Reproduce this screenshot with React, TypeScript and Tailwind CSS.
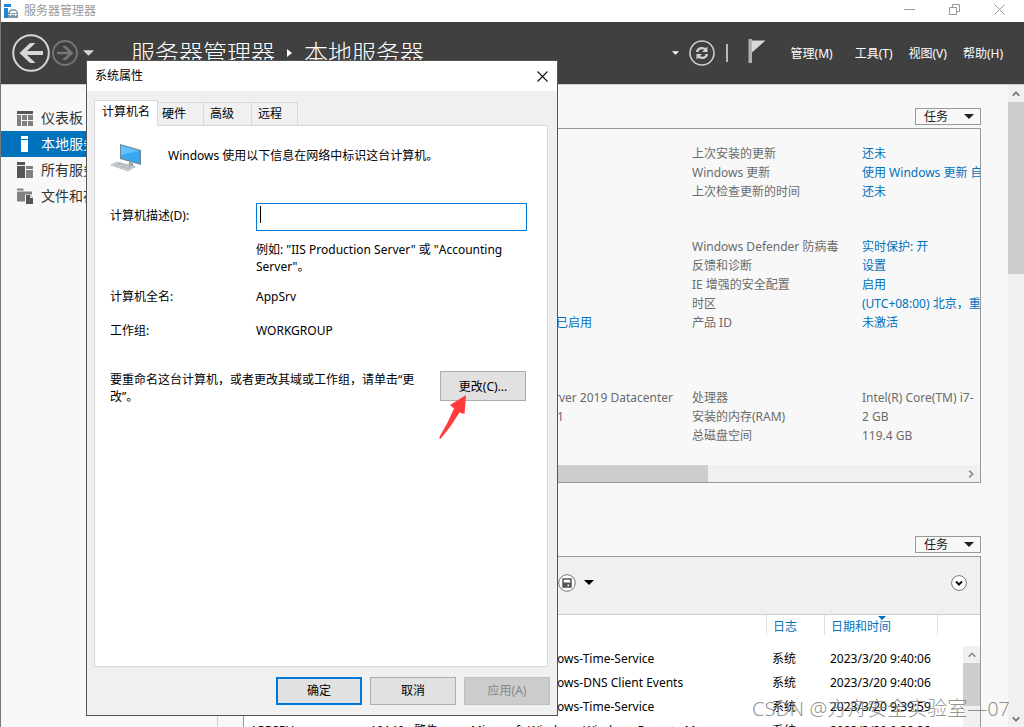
import React from "react";

const menus = ["管理(M)", "工具(T)", "视图(V)", "帮助(H)"];

const tabs = ["硬件", "高级", "远程"];

type Row = { mid?: string; label: string; value: string; link?: boolean };

const groups: Row[][] = [
  [
    { label: "上次安装的更新", value: "还未", link: true },
    { label: "Windows 更新", value: "使用 Windows 更新 自", link: true },
    { label: "上次检查更新的时间", value: "还未", link: true },
  ],
  [
    { label: "Windows Defender 防病毒", value: "实时保护: 开", link: true },
    { label: "反馈和诊断", value: "设置", link: true },
    { label: "IE 增强的安全配置", value: "启用", link: true },
    { label: "时区", value: "(UTC+08:00) 北京，重", link: true },
    { mid: "已启用", label: "产品 ID", value: "未激活", link: true },
  ],
  [
    { mid: "Microsoft Windows Server 2019 Datacenter", label: "处理器", value: "Intel(R) Core(TM) i7-" },
    { mid: "1", label: "安装的内存(RAM)", value: "2 GB" },
    { label: "总磁盘空间", value: "119.4 GB" },
  ],
];

const events = [
  { id: "37", level: "信息", source: "Microsoft-Windows-Time-Service", time: "2023/3/20 9:40:06" },
  { id: "1014", level: "警告", source: "Microsoft-Windows-DNS Client Events", time: "2023/3/20 9:40:06" },
  { id: "37", level: "信息", source: "Microsoft-Windows-Time-Service", time: "2023/3/20 9:39:59" },
  { id: "10149", level: "警告", source: "Microsoft-Windows-Windows Remote M...", time: "2023/3/20 9:38:38" },
];

function Caret({ className }: { className: string }) {
  return (
    <svg viewBox="0 0 10 5" className={className} fill="currentColor" aria-hidden="true">
      <path d="M0 0h10L5 5z" />
    </svg>
  );
}

function Chevron({ className }: { className: string }) {
  return (
    <svg viewBox="0 0 8 8" className={className} fill="none" stroke="currentColor" strokeWidth="1.6" aria-hidden="true">
      <path d="M0.7 5.8L4 2.3l3.3 3.5" />
    </svg>
  );
}

function TaskButton() {
  return (
    <button className="flex h-[17px] w-[66px] items-center justify-between border border-[#999] pr-[6px] pl-2 text-[#222]">
      任务
      <Caret className="h-[5px] w-[10px]" />
    </button>
  );
}

function TitleBar() {
  return (
    <div className="flex h-[22px] shrink-0 items-center justify-between bg-white pr-[19px] pl-[3px] text-[#999]">
      <div className="flex items-center gap-[5px]">
        <svg viewBox="0 0 15 14" className="h-[14px] w-[15px]" aria-hidden="true">
          <path d="M0 0h7v3H0zM0 4h4v10H0z" fill="#1e88d8" />
          <path d="M4 9h10v5H4z" fill="#7897a9" />
          <path d="M4.500 9l2.500-3h4.500l2 3" fill="none" stroke="#7897a9" strokeWidth="1.300" />
          <path d="M4.500 10.500h9M6.500 9.500v2.500m5-2.500v2.500" stroke="#fff" strokeWidth="0.800" />
        </svg>
        <span>服务器管理器</span>
      </div>
      <div className="flex items-center gap-[34px] pb-1">
        <button aria-label="最小化">
          <svg viewBox="0 0 11 11" className="size-[11px]" stroke="#999" fill="none"><path d="M0 5.500h11" /></svg>
        </button>
        <button aria-label="还原">
          <svg viewBox="0 0 11 11" className="size-[11px]" stroke="#999" fill="none">
            <path d="M0.500 3.500h7v7h-7zM3.500 3V0.500h7v7H8" />
          </svg>
        </button>
        <button aria-label="关闭">
          <svg viewBox="0 0 11 11" className="size-[11px]" stroke="#999" fill="none"><path d="M0.500 0.500l10 10m0-10l-10 10" /></svg>
        </button>
      </div>
    </div>
  );
}

function Header() {
  return (
    <header className="flex h-[63px] shrink-0 items-center border-b border-[#d0d0d0] bg-[#404040] pr-[21px] pl-[11px] text-white">
      <button aria-label="后退">
        <svg viewBox="0 0 38 38" className="size-[38px]" fill="none" stroke="#d6d6d6">
          <circle cx="19" cy="19" r="17.800" strokeWidth="2" />
          <path d="M31 19H10" strokeWidth="4" />
          <path d="M23.500 9h-5.500L7.500 19 18 29h5.500L13 19z" fill="#d6d6d6" stroke="none" />
        </svg>
      </button>
      <button aria-label="前进" className="ml-[2px]">
        <svg viewBox="0 0 26 26" className="size-[26px]" fill="none" stroke="#777">
          <circle cx="13" cy="13" r="12" strokeWidth="1.800" />
          <path d="M5 13h14" strokeWidth="2.500" />
          <path d="M10 6h4l7.500 7-7.500 7h-4l7.500-7z" fill="#777" stroke="none" />
        </svg>
      </button>
      <Caret className="ml-[5px] h-[6px] w-[11px] text-[#d6d6d6]" />
      <h1 className="ml-[37px] flex items-center text-2xl font-light whitespace-nowrap">
        服务器管理器
        <svg viewBox="0 0 5 8" className="mx-3 h-2 w-[5px]" fill="#fff"><path d="M0 0l5 4-5 4z" /></svg>
        本地服务器
      </h1>
      <div className="ml-auto flex items-center">
        <Caret className="h-1 w-[7px]" />
        <button aria-label="刷新" className="ml-[10px]">
          <svg viewBox="0 0 26 26" className="size-[26px]" fill="none" stroke="#d0d0d0">
            <circle cx="13" cy="13" r="12" strokeWidth="1.500" />
            <path d="M8 12c1-4.500 6.500-5 9-2M18 14c-1 4.500-6.500 5-9 2" strokeWidth="2.300" />
            <path d="M18.500 6.500v5.500H13zM7.500 19.500V14H13z" fill="#d0d0d0" stroke="none" />
          </svg>
        </button>
        <span className="ml-[11px] h-[18px] w-[2px] bg-[#b8b8b8]" />
        <button aria-label="通知" className="ml-[20px] pb-1">
          <svg viewBox="0 0 18 24" className="h-6 w-[18px]">
            <path d="M0.500 0H4v24H0.500z" fill="#b0b0b0" />
            <path d="M4 1.500h13.500L4 13.500z" fill="#d8d8d8" />
          </svg>
        </button>
        <nav className="ml-[25px] flex pt-[2px]">
          {menus.map((m, i) => (
            <button key={m} className={i === 0 ? "" : i === 1 ? "ml-[22px]" : "ml-4"}>{m}</button>
          ))}
        </nav>
      </div>
    </header>
  );
}

function Sidebar() {
  const item = "flex h-[26px] w-full items-center gap-2 pl-4 text-sm whitespace-nowrap";
  return (
    <aside className="w-[217px] shrink-0 border-r border-[#d0d0d0] pt-5 text-[#333]">
      <a href="#dashboard" className={item}>
        <svg viewBox="0 0 16 15" className="h-[15px] w-4">
          <path d="M0 0h16v3H0z" fill="#555" />
          <path d="M0 4h4v11H0zM5 4h5v5H5zM11 4h5v5h-5zM5 10h5v5H5zM11 10h5v5h-5z" fill="#808080" />
        </svg>
        仪表板
      </a>
      <a href="#local" className={`${item} bg-[#0072bc] text-white`}>
        <svg viewBox="0 0 16 16" className="size-4" fill="#fff"><path d="M4 0h7v3H4zM4 4h7v12H4z" /></svg>
        本地服务器
      </a>
      <a href="#all" className={item}>
        <svg viewBox="0 0 16 16" className="size-4">
          <path d="M0 0h8v3H0zM0 4h8v12H0z" fill="#555" />
          <path d="M9 4h7v3H9zM9 8h7v8H9z" fill="#808080" />
        </svg>
        所有服务器
      </a>
      <a href="#files" className={item}>
        <svg viewBox="0 0 16 16" className="size-4">
          <path d="M0 0.500h6l1 2H0zM0 3.500h15v3H8v7H0z" fill="#808080" />
          <path d="M9 7h4l3 3v6H9z" fill="#555" />
          <path d="M13 7v3h3z" fill="#ddd" />
        </svg>
        文件和存储服务
      </a>
    </aside>
  );
}

function Properties() {
  return (
    <section className="flex h-[355px] flex-col overflow-hidden border border-[#999]">
      <div className="flex grow flex-col overflow-hidden pt-[15px] pl-[216px] text-[#6b6b6b]">
        {groups.map((g, i) => (
          <dl key={i} className={i === 0 ? "" : i === 1 ? "mt-9" : "mt-14"}>
            {g.map((r) => (
              <div key={r.label} className="flex h-[19px] items-center whitespace-nowrap">
                <dd className={r.mid === "已启用" ? "w-[232px] shrink-0 pl-[96px] text-[#0072bc]" : r.mid === "1" ? "w-[232px] shrink-0 pl-[97px]" : "flex w-[232px] shrink-0 justify-end pr-[19px]"}>
                  {r.mid}
                </dd>
                <dt className="w-[170px] shrink-0">{r.label}</dt>
                <dd className="shrink-0">
                  {r.link ? <a href="#setting" className="text-[#0072bc]">{r.value}</a> : r.value}
                </dd>
              </div>
            ))}
          </dl>
        ))}
      </div>
      <div className="flex h-[17px] shrink-0 items-center bg-[#f0f0f0]">
        <div className="h-full w-[464px] bg-[#cdcdcd]" />
        <Chevron className="mr-[5px] ml-auto size-2 rotate-90 text-[#888]" />
      </div>
    </section>
  );
}

function Events() {
  return (
    <section className="border border-[#999] bg-white">
      <div className="flex h-[58px] items-center border-b border-[#ccc] bg-[#f0f0f0] pr-[13px] pb-[6px] pl-[314px]">
        <button aria-label="保存">
          <svg viewBox="0 0 18 18" className="size-[18px]">
            <circle cx="9" cy="9" r="8.300" fill="#fff" stroke="#777" />
            <path d="M5 5h8v8H5z" fill="#fff" stroke="#555" strokeWidth="1.500" />
            <path d="M5 8.500h8V13h-2v-2.500H9.500V13H5z" fill="#555" />
          </svg>
        </button>
        <Caret className="ml-2 h-[5px] w-[10px] text-black" />
        <button aria-label="展开" className="ml-auto">
          <svg viewBox="0 0 16 16" className="size-4">
            <circle cx="8" cy="8" r="7.400" fill="#fff" stroke="#777" />
            <path d="M5 6.500l3 3 3-3" fill="none" stroke="#111" strokeWidth="2" />
          </svg>
        </button>
      </div>
      <div className="flex items-start">
        <table className="w-[694px] table-fixed border-collapse text-left whitespace-nowrap text-black">
          <colgroup>
            <col className="w-[126px]" />
            <col className="w-[44px]" />
            <col className="w-[57px]" />
            <col />
            <col className="w-[58px]" />
            <col className="w-[114px]" />
          </colgroup>
          <thead className="text-[#0072bc]">
            <tr className="h-8 align-top">
              <th colSpan={4} />
              <th className="font-normal">
                <div className="border-l border-[#ddd] pt-1 pl-[6px]">日志</div>
              </th>
              <th className="font-normal">
                <div className="relative border-x border-[#ddd] pt-1 pl-[6px]">
                  日期和时间
                  <Caret className="absolute top-px left-[53px] h-1 w-2" />
                </div>
              </th>
            </tr>
          </thead>
          <tbody>
            {events.map((e, i) => (
              <tr key={i} className="h-6">
                <td className="pl-[6px]">APPSRV</td>
                <td>{e.id}</td>
                <td>{e.level}</td>
                <td>{e.source}</td>
                <td className="pl-[6px]">系统</td>
                <td className="pl-[6px]">{e.time}</td>
              </tr>
            ))}
          </tbody>
        </table>
        <div className="mt-[31px] ml-auto h-[200px] w-[17px] bg-[#f0f0f0] text-[#888]">
          <div className="flex h-[17px] items-center justify-center"><Chevron className="size-2" /></div>
          <div className="h-[43px] bg-[#cdcdcd]" />
        </div>
      </div>
    </section>
  );
}

function Computer() {
  return (
    <svg viewBox="0 0 32 30" className="h-[30px] w-8" aria-hidden="true">
      <path d="M10 1l21 6v15l-21-6z" fill="#6f8796" />
      <path d="M11 2.500l18.500 5.300v12.500L11 15z" fill="#35a8f0" />
      <path d="M11 2.500l18.500 5.300L11 12z" fill="#62c0fa" />
      <path d="M19 19l4 1.200v3l-4-1.200z" fill="#8c9aa3" />
      <path d="M14 22l6-1 6 3-6 2z" fill="#a9b4bb" />
      <path d="M1 22l6-3 18 4.500-7 4.500z" fill="#d5dadd" stroke="#9aa4ab" strokeWidth="0.600" />
      <path d="M4 21l16 5M7 20l15 4.500M6 23.500l6-3.500M11 25l6-3.500M16 26l5-3.300" stroke="#9aa4ab" strokeWidth="0.700" />
    </svg>
  );
}

function Dialog() {
  const btn = "flex h-7 w-[86px] items-center justify-center border";
  return (
    <div role="dialog" aria-label="系统属性" className="absolute top-[60px] left-[85px] flex h-[656px] w-[472px] flex-col border border-[#555] bg-[#f0f0f0] text-black">
      <div className="flex h-[30px] shrink-0 items-center justify-between bg-white pr-[9px] pl-2">
        <span>系统属性</span>
        <button aria-label="关闭对话框">
          <svg viewBox="0 0 11 11" className="size-[11px]" stroke="#111" fill="none"><path d="M0.500 0.500l10 10m0-10l-10 10" strokeWidth="1.100" /></svg>
        </button>
      </div>
      <div className="flex shrink-0 items-end pt-[9px] pl-[7px]">
        <button className="relative -mb-px h-[26px] w-16 border border-b-0 border-[#d9d9d9] bg-white pb-1">计算机名</button>
        {tabs.map((t, i) => (
          <button key={t} className={`h-[23px] border-t border-r border-[#d9d9d9] text-left ${i === 0 ? "w-[46px] pl-1" : i === 1 ? "w-12 pl-[6px]" : "w-[46px] pl-[6px]"}`}>{t}</button>
        ))}
      </div>
      <div className="mr-[9px] ml-[7px] flex grow flex-col border border-[#d9d9d9] bg-white px-[15px] pt-[17px]">
        <div className="flex items-center gap-[26px]">
          <Computer />
          <p className="pb-1">Windows 使用以下信息在网络中标识这台计算机。</p>
        </div>
        <div className="mt-[30px] grid grid-cols-[146px_1fr] leading-[17px]">
          <label htmlFor="desc" className="pt-1">计算机描述(D):</label>
          <div className="relative mr-[5px]">
            <input id="desc" type="text" className="h-7 w-full border border-[#0078d7] bg-white px-[3px] outline-none" />
            <span className="pointer-events-none absolute top-[3px] left-1 h-[17px] w-px bg-black" />
          </div>
          <p className="col-start-2 mt-[10px] w-[262px]">例如: "IIS Production Server" 或 "Accounting Server"。</p>
          <span className="mt-[13px]">计算机全名:</span>
          <span className="mt-[13px]">AppSrv</span>
          <span className="mt-[17px]">工作组:</span>
          <span className="mt-[17px]">WORKGROUP</span>
        </div>
        <div className="relative mt-8 flex items-start justify-between pr-[6px] leading-[17px]">
          <p className="w-[310px]">要重命名这台计算机，或者更改其域或工作组，请单击“更改”。</p>
          <button className="flex h-[30px] w-[86px] items-center justify-center border border-[#adadad] bg-[#e1e1e1]">更改(C)...</button>
          <svg viewBox="0 0 28 44" className="pointer-events-none absolute top-6 left-[329px] h-11 w-7" fill="#ff3b3b" aria-hidden="true">
            <path d="M27 0L25.500 19l-5-1.500Q12 32 1.500 44q-2-.5-.5-3Q9 28 15 13.500L11 10z" />
          </svg>
        </div>
      </div>
      <div className="flex shrink-0 justify-end gap-2 px-[7px] pt-[10px] pb-[10px]">
        <button className="flex h-7 w-[86px] items-center justify-center border-2 border-[#0078d7] bg-[#e1e1e1]">确定</button>
        <button className={`${btn} border-[#adadad] bg-[#e1e1e1]`}>取消</button>
        <button disabled className={`${btn} border-[#bfbfbf] bg-[#ccc] text-[#888]`}>应用(A)</button>
      </div>
    </div>
  );
}

export default function App() {
  return (
    <div className="relative flex h-screen flex-col overflow-hidden border-l border-[#777] bg-[#f8f8f8] font-['Noto_Sans','Noto_Sans_CJK_SC',sans-serif] text-xs">
      <TitleBar />
      <Header />
      <div className="flex min-h-0 grow">
        <Sidebar />
        <main className="min-w-0 grow overflow-hidden pr-[27px] pl-[25px]">
          <div className="flex justify-end pt-[23px] pb-[3px]"><TaskButton /></div>
          <Properties />
          <div className="flex justify-end pt-[53px] pb-[3px]"><TaskButton /></div>
          <Events />
        </main>
        <div className="flex w-4 shrink-0 flex-col bg-[#f0f0f0] text-[#666]">
          <div className="flex h-[17px] items-center justify-center"><Chevron className="size-2" /></div>
          <div className="h-[172px] bg-[#cdcdcd]" />
          <div className="mt-auto flex h-[17px] items-center justify-center"><Chevron className="size-2 rotate-180" /></div>
        </div>
      </div>
      <Dialog />
      <p className="pointer-events-none absolute right-[14px] bottom-[6px] text-xl leading-6 font-light whitespace-nowrap text-[#777]/80">CSDN @方舟安全实验室—07</p>
    </div>
  );
}
